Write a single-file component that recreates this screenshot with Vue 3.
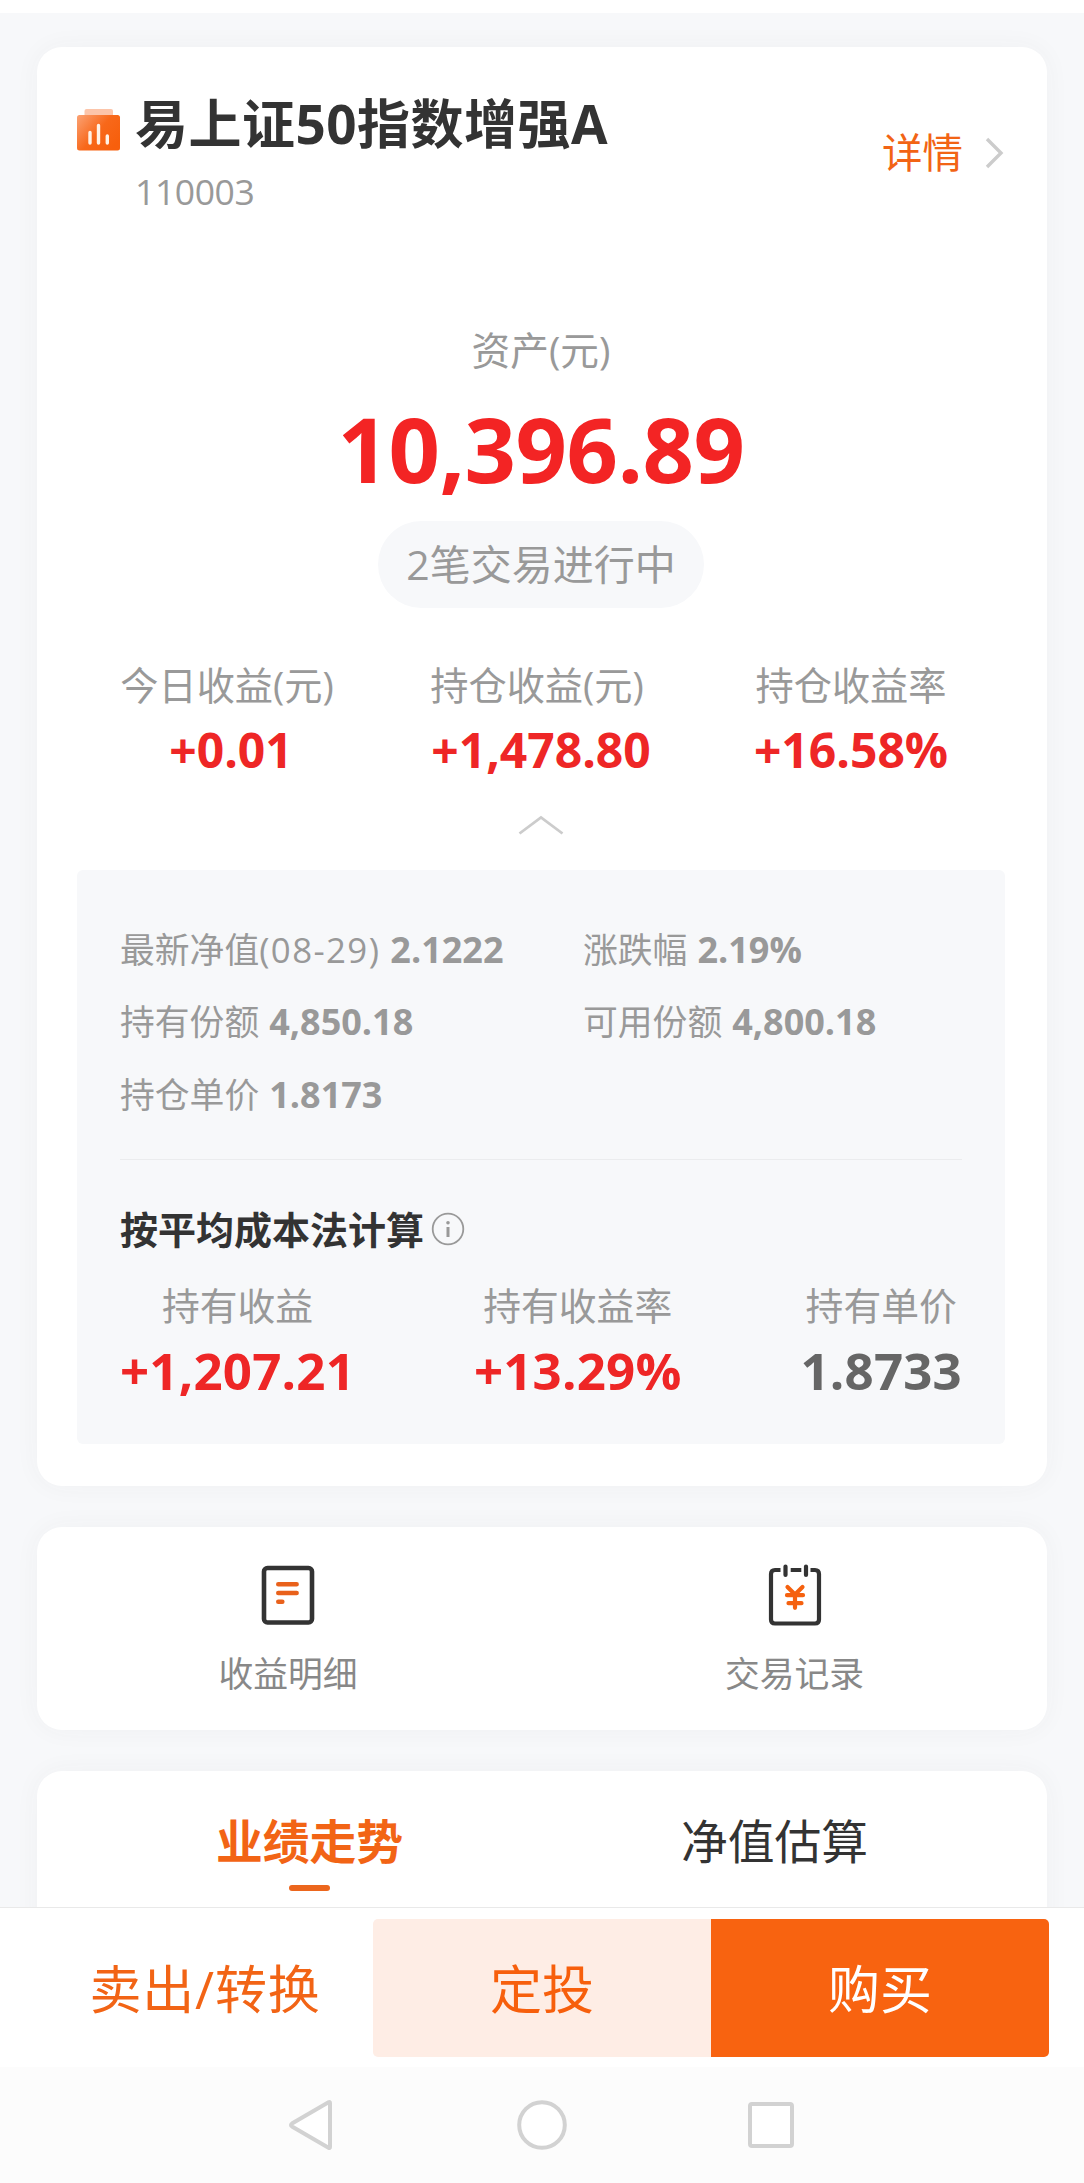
<script setup>
import { ref } from "vue";

// --- DATOS DEL FONDO ---
const fund = ref({
  name: "易上证50指数增强A",
  code: "110003",
  asset: "10,396.89",
  pending: "2笔交易进行中",
});

const stats = ref([
  { label: "今日收益(元)", value: "+0.01" },
  { label: "持仓收益(元)", value: "+1,478.80" },
  { label: "持仓收益率", value: "+16.58%" },
]);

const details = ref([
  { label: "最新净值", date: "(08-29)", value: "2.1222" },
  { label: "涨跌幅", value: "2.19%" },
  { label: "持有份额", value: "4,850.18" },
  { label: "可用份额", value: "4,800.18" },
  { label: "持仓单价", value: "1.8173" },
]);

const averageCost = ref([
  { label: "持有收益", value: "+1,207.21" },
  { label: "持有收益率", value: "+13.29%" },
  { label: "持有单价", value: "1.8733", neutral: true },
]);

// --- PESTAÑAS ---
const tabs = ["业绩走势", "净值估算"];
const activeTab = ref(0);
const expanded = ref(true);
</script>

<template>
  <div class="page">
    <main class="content">
      <section class="card fund-card">
        <header class="fund-header">
          <svg class="fund-icon" width="44" height="46" viewBox="0 0 44 46">
            <defs>
              <linearGradient id="fundGradient" x1="0" y1="0" x2="1" y2="0.7">
                <stop offset="0" stop-color="#fba274" />
                <stop offset="0.55" stop-color="#f8681a" />
                <stop offset="1" stop-color="#f75f0c" />
              </linearGradient>
            </defs>
            <rect x="7.5" y="1" width="28.5" height="12" rx="2" fill="#fcc5aa" />
            <rect x="0" y="7" width="43" height="35.5" rx="2.5" fill="url(#fundGradient)" />
            <path
              d="M13 24.5v10.5M21.5 17.5v17.5M30.3 28v7"
              stroke="#fff2e6"
              stroke-width="3.4"
              stroke-linecap="round"
            />
          </svg>
          <div class="fund-title">
            <h1>{{ fund.name }}</h1>
            <p>{{ fund.code }}</p>
          </div>
          <a class="more">
            详情
            <svg width="20" height="34" viewBox="0 0 20 34">
              <path d="M2 3l14 14L2 31" fill="none" stroke="#ccc" stroke-width="3.4" />
            </svg>
          </a>
        </header>

        <div class="asset">
          <p class="asset-label">资产(元)</p>
          <p class="asset-value">{{ fund.asset }}</p>
          <span class="pill">{{ fund.pending }}</span>
        </div>

        <div class="stats">
          <div v-for="item in stats" :key="item.label" class="stat">
            <p class="label">{{ item.label }}</p>
            <p class="value">{{ item.value }}</p>
          </div>
        </div>

        <div class="toggle" @click="expanded = !expanded">
          <svg width="46" height="22" viewBox="0 0 46 22">
            <path d="M1.5 19.5L23 3.5l21.5 16" fill="none" stroke="#ccc" stroke-width="2.8" />
          </svg>
        </div>

        <div v-if="expanded" class="panel">
          <div class="details">
            <div v-for="item in details" :key="item.label" class="detail">
              <span>{{ item.label }}<i v-if="item.date">{{ item.date }}</i></span>
              <b>{{ item.value }}</b>
            </div>
          </div>
          <div class="panel-title">
            <h2>按平均成本法计算</h2>
            <svg width="34" height="34" viewBox="0 0 34 34">
              <circle cx="17" cy="17" r="15.3" fill="none" stroke="#999" stroke-width="1.8" />
              <circle cx="17" cy="10.7" r="1.8" fill="#999" />
              <path d="M17 15v10" stroke="#999" stroke-width="3" />
            </svg>
          </div>
          <div class="average">
            <div v-for="item in averageCost" :key="item.label" class="stat">
              <p class="label">{{ item.label }}</p>
              <p class="value" :class="{ neutral: item.neutral }">{{ item.value }}</p>
            </div>
          </div>
        </div>
      </section>

      <section class="card links">
        <a class="link">
          <svg width="64" height="64" viewBox="0 0 64 64">
            <rect x="8" y="5" width="48" height="54.5" rx="3.5" fill="#fff" stroke="#333" stroke-width="4.6" />
            <path
              d="M22.3 21.2h18.3M22.3 30h18.3M22.3 38.7h4"
              stroke="#e9611b"
              stroke-width="4.6"
              stroke-linecap="round"
            />
          </svg>
          <span>收益明细</span>
        </a>
        <a class="link">
          <svg width="64" height="64" viewBox="0 0 64 64">
            <path
              d="M17.5 7H12Q8 7 8 11V56.5Q8 60.5 12 60.5H52Q56 60.5 56 56.5V11Q56 7 52 7H47.5M27.7 7H38.3"
              fill="none"
              stroke="#333"
              stroke-width="4.2"
            />
            <path d="M22.5 3.5v8.5M43 3.5v8.5" stroke="#333" stroke-width="4.2" stroke-linecap="round" />
            <path
              d="M24.5 24l7.5 7.5 7.5-7.5M24 32.2h16M25.5 40.2h13M32 32v12.8"
              fill="none"
              stroke="#f5610f"
              stroke-width="4.2"
              stroke-linecap="round"
            />
          </svg>
          <span>交易记录</span>
        </a>
      </section>

      <section class="card tabs">
        <div
          v-for="(tab, index) in tabs"
          :key="tab"
          class="tab"
          :class="{ active: index === activeTab }"
          @click="activeTab = index"
        >
          {{ tab }}
        </div>
      </section>
    </main>

    <footer class="actions">
      <button class="sell">卖出/转换</button>
      <button class="plan">定投</button>
      <button class="buy">购买</button>
    </footer>

    <nav class="system-nav">
      <svg width="52" height="56" viewBox="0 0 52 56">
        <path d="M43 6V50Q43 51.5 41.5 50.7L5 29.5Q3 28 5 26.5L41.5 5.3Q43 4.500 43 6Z" />
      </svg>
      <svg width="52" height="56" viewBox="0 0 52 56">
        <circle cx="26" cy="28" r="22.8" />
      </svg>
      <svg width="52" height="56" viewBox="0 0 52 56">
        <rect x="5" y="7" width="42" height="42" rx="2" />
      </svg>
    </nav>
  </div>
</template>

<style>
body {
  margin: 0;
  background: #fff;
}
</style>

<style scoped>
.page {
  width: 1084px;
  height: 2183px;
  padding-top: 13px;
  box-sizing: border-box;
  overflow: hidden;
  display: flex;
  flex-direction: column;
  background: #fff;
  color: #333;
  font-family: "Open Sans", "Noto Sans CJK SC", sans-serif;
}
p,
h1,
h2 {
  margin: 0;
}
svg {
  display: block;
  flex: none;
}

/* Zona con las tarjetas */
.content {
  height: 1894px;
  padding: 34px 37px 0;
  box-sizing: border-box;
  overflow: hidden;
  display: flex;
  flex-direction: column;
  gap: 41px;
  background: #f7f8fa;
}
.card {
  flex: none;
  box-sizing: border-box;
  border-radius: 25px;
  background: #fff;
  box-shadow: 0 0 26px rgba(60, 65, 70, 0.045);
}
.fund-card {
  height: 1439px;
  padding: 47px 42px 0 40px;
}

/* Cabecera */
.fund-header {
  display: flex;
  align-items: flex-start;
}
.fund-icon {
  margin-top: 14px;
}
.fund-title {
  flex: 1;
  margin-left: 14px;
}
.fund-title h1 {
  font-size: 53px;
  line-height: 60px;
  font-weight: 700;
  letter-spacing: 0.5px;
}
.fund-title p {
  margin-top: 12px;
  font-size: 35.5px;
  line-height: 50px;
  letter-spacing: -0.4px;
  color: #999;
}
.more {
  display: flex;
  align-items: center;
  gap: 22px;
  margin-top: 29px;
  font-size: 40.5px;
  line-height: 60px;
  color: #f26415;
}

/* Importe total */
.asset {
  display: flex;
  flex-direction: column;
  align-items: center;
  margin-top: 109px;
  color: #999;
}
.asset-label {
  font-size: 38.7px;
  line-height: 50px;
}
.asset-value {
  margin-top: 23px;
  font-size: 90px;
  line-height: 100px;
  font-weight: 700;
  letter-spacing: -0.5px;
  color: #f32424;
}
.pill {
  width: 326px;
  margin-top: 23px;
  border-radius: 44px;
  font-size: 41px;
  line-height: 87px;
  text-align: center;
  background: #f7f8fa;
}

.stats {
  display: grid;
  grid-template-columns: repeat(3, 310px);
  justify-content: center;
  margin-top: 52px;
}
.stat {
  text-align: center;
}
.label {
  font-size: 37.8px;
  line-height: 50px;
  color: #999;
}
.stats .label {
  font-size: 38.2px;
}
.stats .stat:not(:last-child) .label {
  padding-right: 8px;
}
.value {
  margin-top: 9px;
  font-size: 48px;
  line-height: 60px;
  font-weight: 700;
  color: #ee2626;
}
.stats .value {
  margin-top: 10px;
}
.toggle {
  display: flex;
  justify-content: center;
  margin-top: 34px;
}

/* Panel desplegable */
.panel {
  height: 574px;
  margin-top: 34px;
  padding: 44px 43px 0;
  box-sizing: border-box;
  border-radius: 6px;
  background: #f7f8fa;
}
.details {
  display: grid;
  grid-template-columns: 463px 1fr;
  grid-auto-rows: 72.3px;
  padding-bottom: 28px;
  border-bottom: 1.5px solid #ebecee;
}
.detail {
  display: flex;
  gap: 10px;
  font-size: 34.8px;
  line-height: 72px;
  color: #999;
}
.detail i {
  font-style: normal;
  letter-spacing: 1.4px;
}
.detail b {
  font-size: 36px;
}
.panel-title {
  display: flex;
  align-items: center;
  gap: 7px;
  margin-top: 44px;
}
.panel-title h2 {
  font-size: 38px;
  line-height: 50px;
}
.average {
  display: flex;
  justify-content: space-between;
  margin-top: 27px;
}
.average .value {
  font-size: 51px;
  letter-spacing: 0.2px;
}
.average .neutral {
  color: #666;
}

.links {
  height: 203px;
  padding-top: 36px;
  display: grid;
  grid-template-columns: 502px 511px;
}
.link {
  display: flex;
  flex-direction: column;
  align-items: center;
  gap: 22px;
  font-size: 34.8px;
  line-height: 50px;
  color: #888;
}

.tabs {
  height: 180px;
  padding: 40px 40px 0;
  display: grid;
  grid-template-columns: 1fr 1fr;
}
.tab {
  display: flex;
  flex-direction: column;
  align-items: center;
  font-size: 46.8px;
  line-height: 60px;
}
.tab.active {
  font-weight: 700;
  color: #f26415;
}
.tab.active::after {
  content: "";
  width: 41px;
  height: 6px;
  margin-top: 14px;
  border-radius: 3px;
  background: #ec661d;
}

/* Botones inferiores */
.actions {
  flex: none;
  display: flex;
  height: 160px;
  padding: 11px 35px 0 37px;
  box-sizing: border-box;
  border-top: 1px solid #e9e9e9;
}
.actions button {
  width: 338px;
  height: 138px;
  padding: 0 0 4px;
  border: 0;
  font-family: inherit;
  font-size: 52px;
  color: #f26415;
  background: none;
}
.actions .sell {
  width: 336px;
  letter-spacing: 0.8px;
}
.actions .plan {
  border-radius: 5px 0 0 5px;
  color: #f75f0c;
  background: #feede5;
}
.actions .buy {
  border-radius: 0 5px 5px 0;
  color: #fff;
  background: #f86310;
}

.system-nav {
  flex: 1;
  display: flex;
  justify-content: center;
  gap: 177px;
  padding-top: 30px;
  background: #fcfcfc;
}
.system-nav path,
.system-nav circle,
.system-nav rect {
  fill: #fff;
  stroke: #d2d2d2;
  stroke-width: 4;
}
</style>
